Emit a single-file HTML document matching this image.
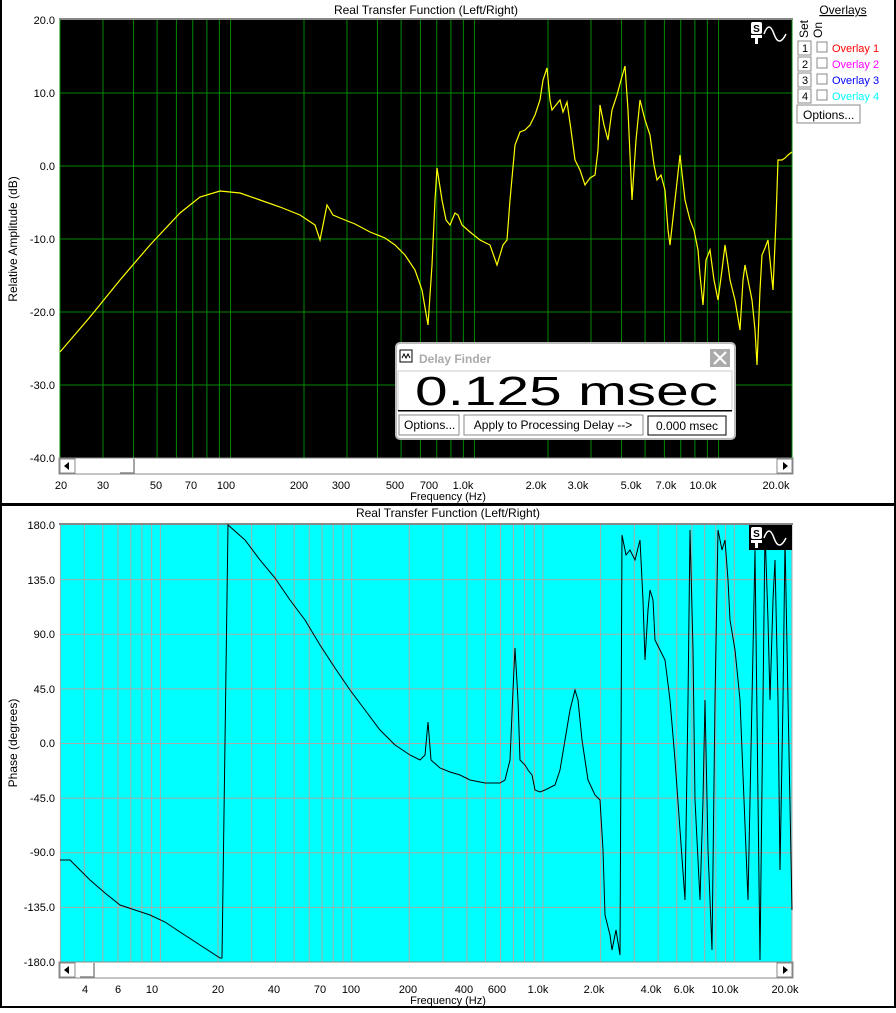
<!DOCTYPE html>
<html><head><meta charset="utf-8"><style>
body{margin:0;width:896px;height:1008px;overflow:hidden;background:#fff;font-family:"Liberation Sans",sans-serif}
svg text{font-family:"Liberation Sans",sans-serif}
</style></head><body>
<svg id="s" width="896" height="1008" xmlns="http://www.w3.org/2000/svg" font-size="12">
<rect x="0" y="0" width="896" height="1008" fill="#fff"/>
<rect x="0" y="0" width="2" height="1008" fill="#000"/>
<rect x="0" y="503" width="896" height="3" fill="#000"/>
<rect x="894" y="0" width="2" height="1008" fill="#000"/>
<rect x="0" y="1006" width="896" height="2" fill="#000"/>
<!-- top plot -->
<text x="426" y="14" text-anchor="middle">Real Transfer Function (Left/Right)</text>
<rect x="59" y="18" width="734" height="2" fill="#888"/>
<rect x="60" y="20" width="732" height="438" fill="#000"/>
<g id="gt"></g>
<polyline fill="none" stroke="#ff0" stroke-width="1.2" points="60,352 90,317 120,280 150,245 180,213 200,197 220,191 240,193 260,200 280,207 300,215 315,225 320,240 327,205 333,215 340,218 355,224 370,232 385,238 395,245 405,255 415,270 422,290 428,325 432,265 435,200 437,168 442,200 446,220 450,225 455,213 458,215 462,225 470,232 480,240 490,245 497,265 503,245 507,240 510,200 515,145 520,132 525,130 530,125 535,115 540,100 543,80 547,68 550,100 552,110 556,105 560,100 563,112 567,102 571,130 575,160 580,170 585,185 590,178 595,175 598,150 600,105 604,125 608,140 612,110 617,95 621,80 625,66 628,110 632,200 636,140 640,100 645,120 650,135 654,165 657,180 661,175 665,190 668,230 670,245 675,200 680,155 685,200 690,220 694,230 698,250 700,275 703,305 706,260 710,250 714,280 718,300 722,270 725,245 728,265 730,280 735,300 740,330 743,280 745,265 749,285 752,300 755,330 757,365 760,290 762,255 765,248 768,240 771,270 773,290 776,220 778,160 782,160 785,158 788,155 792,152"/>
<!-- ST logo top -->
<g fill="#fff"><rect x="751" y="22" width="11" height="12" rx="2"/><rect x="751" y="35" width="11" height="3"/><rect x="755" y="35" width="3" height="9"/></g>
<text x="756.5" y="32" font-size="10" font-weight="bold" text-anchor="middle" fill="#000">S</text>
<path d="M764 34 Q769 20 774 34 Q779 48 786 34" fill="none" stroke="#fff" stroke-width="1.5"/>
<g font-size="11" text-anchor="end">
<text x="55" y="24">20.0</text><text x="55" y="97">10.0</text><text x="55" y="170">0.0</text><text x="55" y="243">-10.0</text><text x="55" y="316">-20.0</text><text x="55" y="389">-30.0</text><text x="55" y="462">-40.0</text></g>
<text transform="translate(17,239) rotate(-90)" text-anchor="middle" font-size="12">Relative Amplitude (dB)</text>
<rect x="59" y="458" width="734" height="16" fill="#fff" stroke="#888"/>
<rect x="60" y="459" width="15" height="14" fill="#fff" stroke="#888"/><path d="M64 466 L69 462 L69 470Z"/>
<path d="M120 473 L134 473 L134 459" fill="none" stroke="#888" stroke-width="1.5"/>
<rect x="777" y="459" width="15" height="14" fill="#fff" stroke="#888"/><path d="M788 466 L783 462 L783 470Z"/>
<g font-size="11" text-anchor="middle">
<text x="61" y="489">20</text><text x="103" y="489">30</text><text x="156" y="489">50</text><text x="191" y="489">70</text><text x="226" y="489">100</text><text x="299" y="489">200</text><text x="341" y="489">300</text><text x="395" y="489">500</text><text x="429" y="489">700</text><text x="463" y="489">1.0k</text><text x="536" y="489">2.0k</text><text x="578" y="489">3.0k</text><text x="631" y="489">5.0k</text><text x="666" y="489">7.0k</text><text x="703" y="489">10.0k</text><text x="776" y="489">20.0k</text></g>
<text x="448" y="500" text-anchor="middle" font-size="11">Frequency (Hz)</text>
<!-- overlays -->
<text x="843" y="14" text-anchor="middle" text-decoration="underline">Overlays</text>
<text transform="translate(808,38) rotate(-90)">Set</text>
<text transform="translate(822,38) rotate(-90)">On</text>
<g font-size="11">
<g id="ov"></g>
</g>
<rect x="797" y="105" width="63" height="18" fill="#fff" stroke="#888"/><text x="803" y="119">Options...</text>
<!-- delay finder -->
<rect x="396" y="343" width="339" height="96" rx="4" fill="#fff" stroke="#bbb" stroke-width="2"/>
<rect x="400" y="350" width="12" height="12" fill="#fff" stroke="#000"/>
<path d="M402 358 L404 354 L406 358 L408 354 L410 358" fill="none" stroke="#000"/>
<text x="419" y="363" fill="#aaa" font-weight="bold" font-size="12">Delay Finder</text>
<rect x="710" y="349" width="20" height="18" fill="#aaa"/><path d="M714 352 L726 364 M726 352 L714 364" stroke="#fff" stroke-width="2"/>
<rect x="398" y="371" width="334" height="40" fill="#fff" stroke="#ccc"/>
<text x="415" y="405" font-size="41" textLength="303" lengthAdjust="spacingAndGlyphs">0.125 msec</text>
<rect x="398" y="410" width="334" height="1.5" fill="#000"/>
<rect x="399" y="415" width="60" height="20" fill="#fff" stroke="#888"/><text x="404" y="429">Options...</text>
<rect x="464" y="415" width="179" height="20" fill="#fff" stroke="#888"/><text x="553" y="429" text-anchor="middle">Apply to Processing Delay --&gt;</text>
<rect x="648" y="416" width="78" height="19" fill="#fff" stroke="#000"/><text x="687" y="430" text-anchor="middle">0.000 msec</text>
<!-- bottom plot -->
<text x="448" y="517" text-anchor="middle">Real Transfer Function (Left/Right)</text>
<rect x="59" y="523" width="734" height="2" fill="#888"/>
<rect x="60" y="525" width="732" height="437" fill="#0ff"/>
<g id="gb"></g>
<polyline fill="none" stroke="#000" stroke-width="1" points="60,860 70,860 80,870 90,880 105,893 120,905 135,910 150,915 165,922 180,932 200,945 220,958 222,958 228,525 245,540 260,560 275,578 290,600 305,620 320,645 335,668 350,690 365,710 380,730 395,745 410,755 420,760 425,755 428,722 431,760 440,768 450,772 460,775 470,780 485,783 500,783 505,780 510,760 513,690 515,648 518,700 520,760 525,765 528,770 532,775 535,790 540,792 545,790 555,785 560,770 565,740 570,710 575,690 578,700 582,740 588,780 595,795 600,800 603,850 605,915 610,935 612,950 616,930 620,955 622,535 626,555 630,550 635,560 640,540 643,600 645,660 648,610 650,590 653,600 655,640 660,650 665,660 670,700 675,760 680,830 685,900 688,700 690,530 693,650 695,800 700,900 703,800 705,700 708,850 712,950 715,700 718,530 722,550 725,540 728,580 730,620 735,650 740,700 744,800 748,900 752,700 755,550 758,800 760,960 763,700 765,530 768,620 770,700 773,600 775,560 778,700 780,870 783,700 785,540 788,700 792,910"/>
<rect x="749" y="525" width="43" height="25" fill="#000"/>
<g fill="#fff"><rect x="751" y="527" width="11" height="12" rx="2"/><rect x="751" y="540" width="11" height="3"/><rect x="755" y="540" width="3" height="8"/></g>
<text x="756.5" y="537" font-size="10" font-weight="bold" text-anchor="middle" fill="#000">S</text>
<path d="M764 538 Q769 524 774 538 Q779 552 786 538" fill="none" stroke="#fff" stroke-width="1.5"/>
<g font-size="11" text-anchor="end">
<text x="55" y="529">180.0</text><text x="55" y="584">135.0</text><text x="55" y="638">90.0</text><text x="55" y="693">45.0</text><text x="55" y="747">0.0</text><text x="55" y="802">-45.0</text><text x="55" y="856">-90.0</text><text x="55" y="911">-135.0</text><text x="55" y="966">-180.0</text></g>
<text transform="translate(17,743) rotate(-90)" text-anchor="middle" font-size="12">Phase (degrees)</text>
<rect x="59" y="962" width="734" height="16" fill="#fff" stroke="#888"/>
<rect x="60" y="963" width="15" height="14" fill="#fff" stroke="#888"/><path d="M64 970 L69 966 L69 974Z"/>
<path d="M80 977 L94 977 L94 963" fill="none" stroke="#888" stroke-width="1.5"/>
<rect x="777" y="963" width="15" height="14" fill="#fff" stroke="#888"/><path d="M788 970 L783 966 L783 974Z"/>
<g font-size="11" text-anchor="middle">
<text x="85" y="993">4</text><text x="118" y="993">6</text><text x="152" y="993">10</text><text x="218" y="993">20</text><text x="274" y="993">40</text><text x="320" y="993">70</text><text x="351" y="993">100</text><text x="408" y="993">200</text><text x="464" y="993">400</text><text x="497" y="993">600</text><text x="538" y="993">1.0k</text><text x="594" y="993">2.0k</text><text x="651" y="993">4.0k</text><text x="684" y="993">6.0k</text><text x="725" y="993">10.0k</text><text x="785" y="993">20.0k</text></g>
<text x="448" y="1004" text-anchor="middle" font-size="11">Frequency (Hz)</text>
</svg>
<script>
var NS="http://www.w3.org/2000/svg";
function ln(g,x1,y1,x2,y2,c){var l=document.createElementNS(NS,"line");l.setAttribute("x1",x1);l.setAttribute("y1",y1);l.setAttribute("x2",x2);l.setAttribute("y2",y2);l.setAttribute("stroke",c);l.setAttribute("stroke-width",1);g.appendChild(l);}
var gt=document.getElementById("gt"),gb=document.getElementById("gb");
var fs=[];for(var d=1;d<=10000;d*=10)for(var m=1;m<10;m++)fs.push(m*d);fs.push(20000);
fs.forEach(function(f){
 if(f>=20&&f<=20000){var x=60+732*Math.log10(f/20)/3;ln(gt,x,20,x,458,"#080");ln(gt,x,458,x,462,"#000");}
 if(f>=3&&f<=20000){var x2=218+191.3*Math.log10(f/20);if(x2>=60&&x2<=792){ln(gb,x2,525,x2,962,"#aaa");ln(gb,x2,962,x2,966,"#000");}}
});
for(var i=1;i<6;i++){var y=20+i*73;ln(gt,60,y,792,y,"#080");}
for(var i=1;i<8;i++){var y=525+i*437/8;ln(gb,60,y,792,y,"#aaa");}
var ov=document.getElementById("ov"),cols=["#f00","#f0f","#00f","#0ff"];
for(var i=0;i<4;i++){var y=41+i*16;
 var r=document.createElementNS(NS,"rect");r.setAttribute("x",798);r.setAttribute("y",y);r.setAttribute("width",13);r.setAttribute("height",14);r.setAttribute("fill","#fff");r.setAttribute("stroke","#888");ov.appendChild(r);
 var t=document.createElementNS(NS,"text");t.setAttribute("x",802);t.setAttribute("y",y+11);t.textContent=(i+1);ov.appendChild(t);
 var c=document.createElementNS(NS,"rect");c.setAttribute("x",817);c.setAttribute("y",y+1);c.setAttribute("width",10);c.setAttribute("height",10);c.setAttribute("fill","#fff");c.setAttribute("stroke","#888");ov.appendChild(c);
 var t2=document.createElementNS(NS,"text");t2.setAttribute("x",832);t2.setAttribute("y",y+11);t2.setAttribute("fill",cols[i]);t2.textContent="Overlay "+(i+1);ov.appendChild(t2);}
</script>
</body></html>
